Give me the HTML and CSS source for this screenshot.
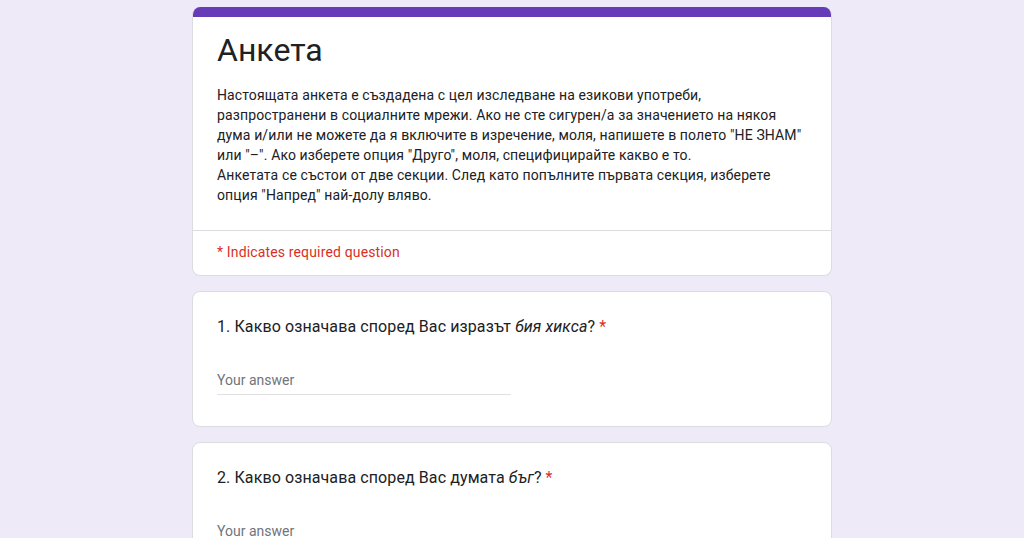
FILE: index.html
```html
<!DOCTYPE html>
<html lang="bg">
<head>
<meta charset="utf-8">
<link rel="stylesheet" href="styles.css">
</head>
<body>
<div class="form">
  <div class="card header-card">
    <div class="bar"></div>
    <div class="header-body">
      <h1 class="title">Анкета</h1>
      <p class="desc">Настоящата анкета е създадена с цел изследване на езикови употреби,<br>разпространени в социалните мрежи. Ако не сте сигурен/а за значението на някоя<br>дума и/или не можете да я включите в изречение, моля, напишете в полето "НЕ ЗНАМ"<br>или "–". Ако изберете опция "Друго", моля, специфицирайте какво е то.<br>Анкетата се състои от две секции. След като попълните първата секция, изберете<br>опция "Напред" най-долу вляво.</p>
    </div>
    <div class="required-note">* Indicates required question</div>
  </div>

  <div class="card question">
    <div class="q-title">1. Какво означава според Вас изразът <em>бия хикса</em>? <span class="star">*</span></div>
    <div class="answer">Your answer</div>
  </div>

  <div class="card question">
    <div class="q-title">2. Какво означава според Вас думата <em>бъг</em>? <span class="star">*</span></div>
    <div class="answer">Your answer</div>
  </div>
</div>
</body>
</html>
```

FILE: styles.css
```css
html, body {
  margin: 0;
  padding: 0;
}
body {
  background: #efeaf7;
  font-family: Roboto, "Noto Sans", Arial, sans-serif;
  color: #202124;
  height: 538px;
  overflow: hidden;
}
.form {
  width: 640px;
  margin: 0 auto;
  padding-top: 7px;
  display: flex;
  flex-direction: column;
  gap: 15px;
}
.card {
  background: #fff;
  border: 1px solid #dadce0;
  border-radius: 8px;
  box-sizing: border-box;
}
.header-card {
  border-top: none;
  overflow: hidden;
}
.bar {
  height: 10px;
  background: #673ab7;
}
.header-body {
  padding: 13px 24px 25px;
  border-bottom: 1px solid #dadce0;
}
.title {
  margin: 0;
  font-size: 32px;
  line-height: 40px;
  font-weight: 400;
  color: #202124;
}
.desc {
  margin: 15px 0 0;
  font-size: 14px;
  line-height: 20px;
  letter-spacing: 0.12px;
  white-space: nowrap;
  color: #202124;
}
.required-note {
  padding: 11px 24px 13px;
  font-size: 14px;
  line-height: 20px;
  letter-spacing: 0.15px;
  color: #d93025;
}
.question {
  padding: 23px 24px 31px;
}
.q-title {
  font-size: 16px;
  line-height: 24px;
  letter-spacing: 0.1px;
  color: #202124;
}
.q-title em {
  font-style: italic;
}
.star {
  color: #d93025;
}
.answer {
  margin-top: 31px;
  width: 294px;
  padding-bottom: 4px;
  border-bottom: 1px solid #e0e0e0;
  font-size: 14px;
  line-height: 20px;
  color: #70757a;
}
```
